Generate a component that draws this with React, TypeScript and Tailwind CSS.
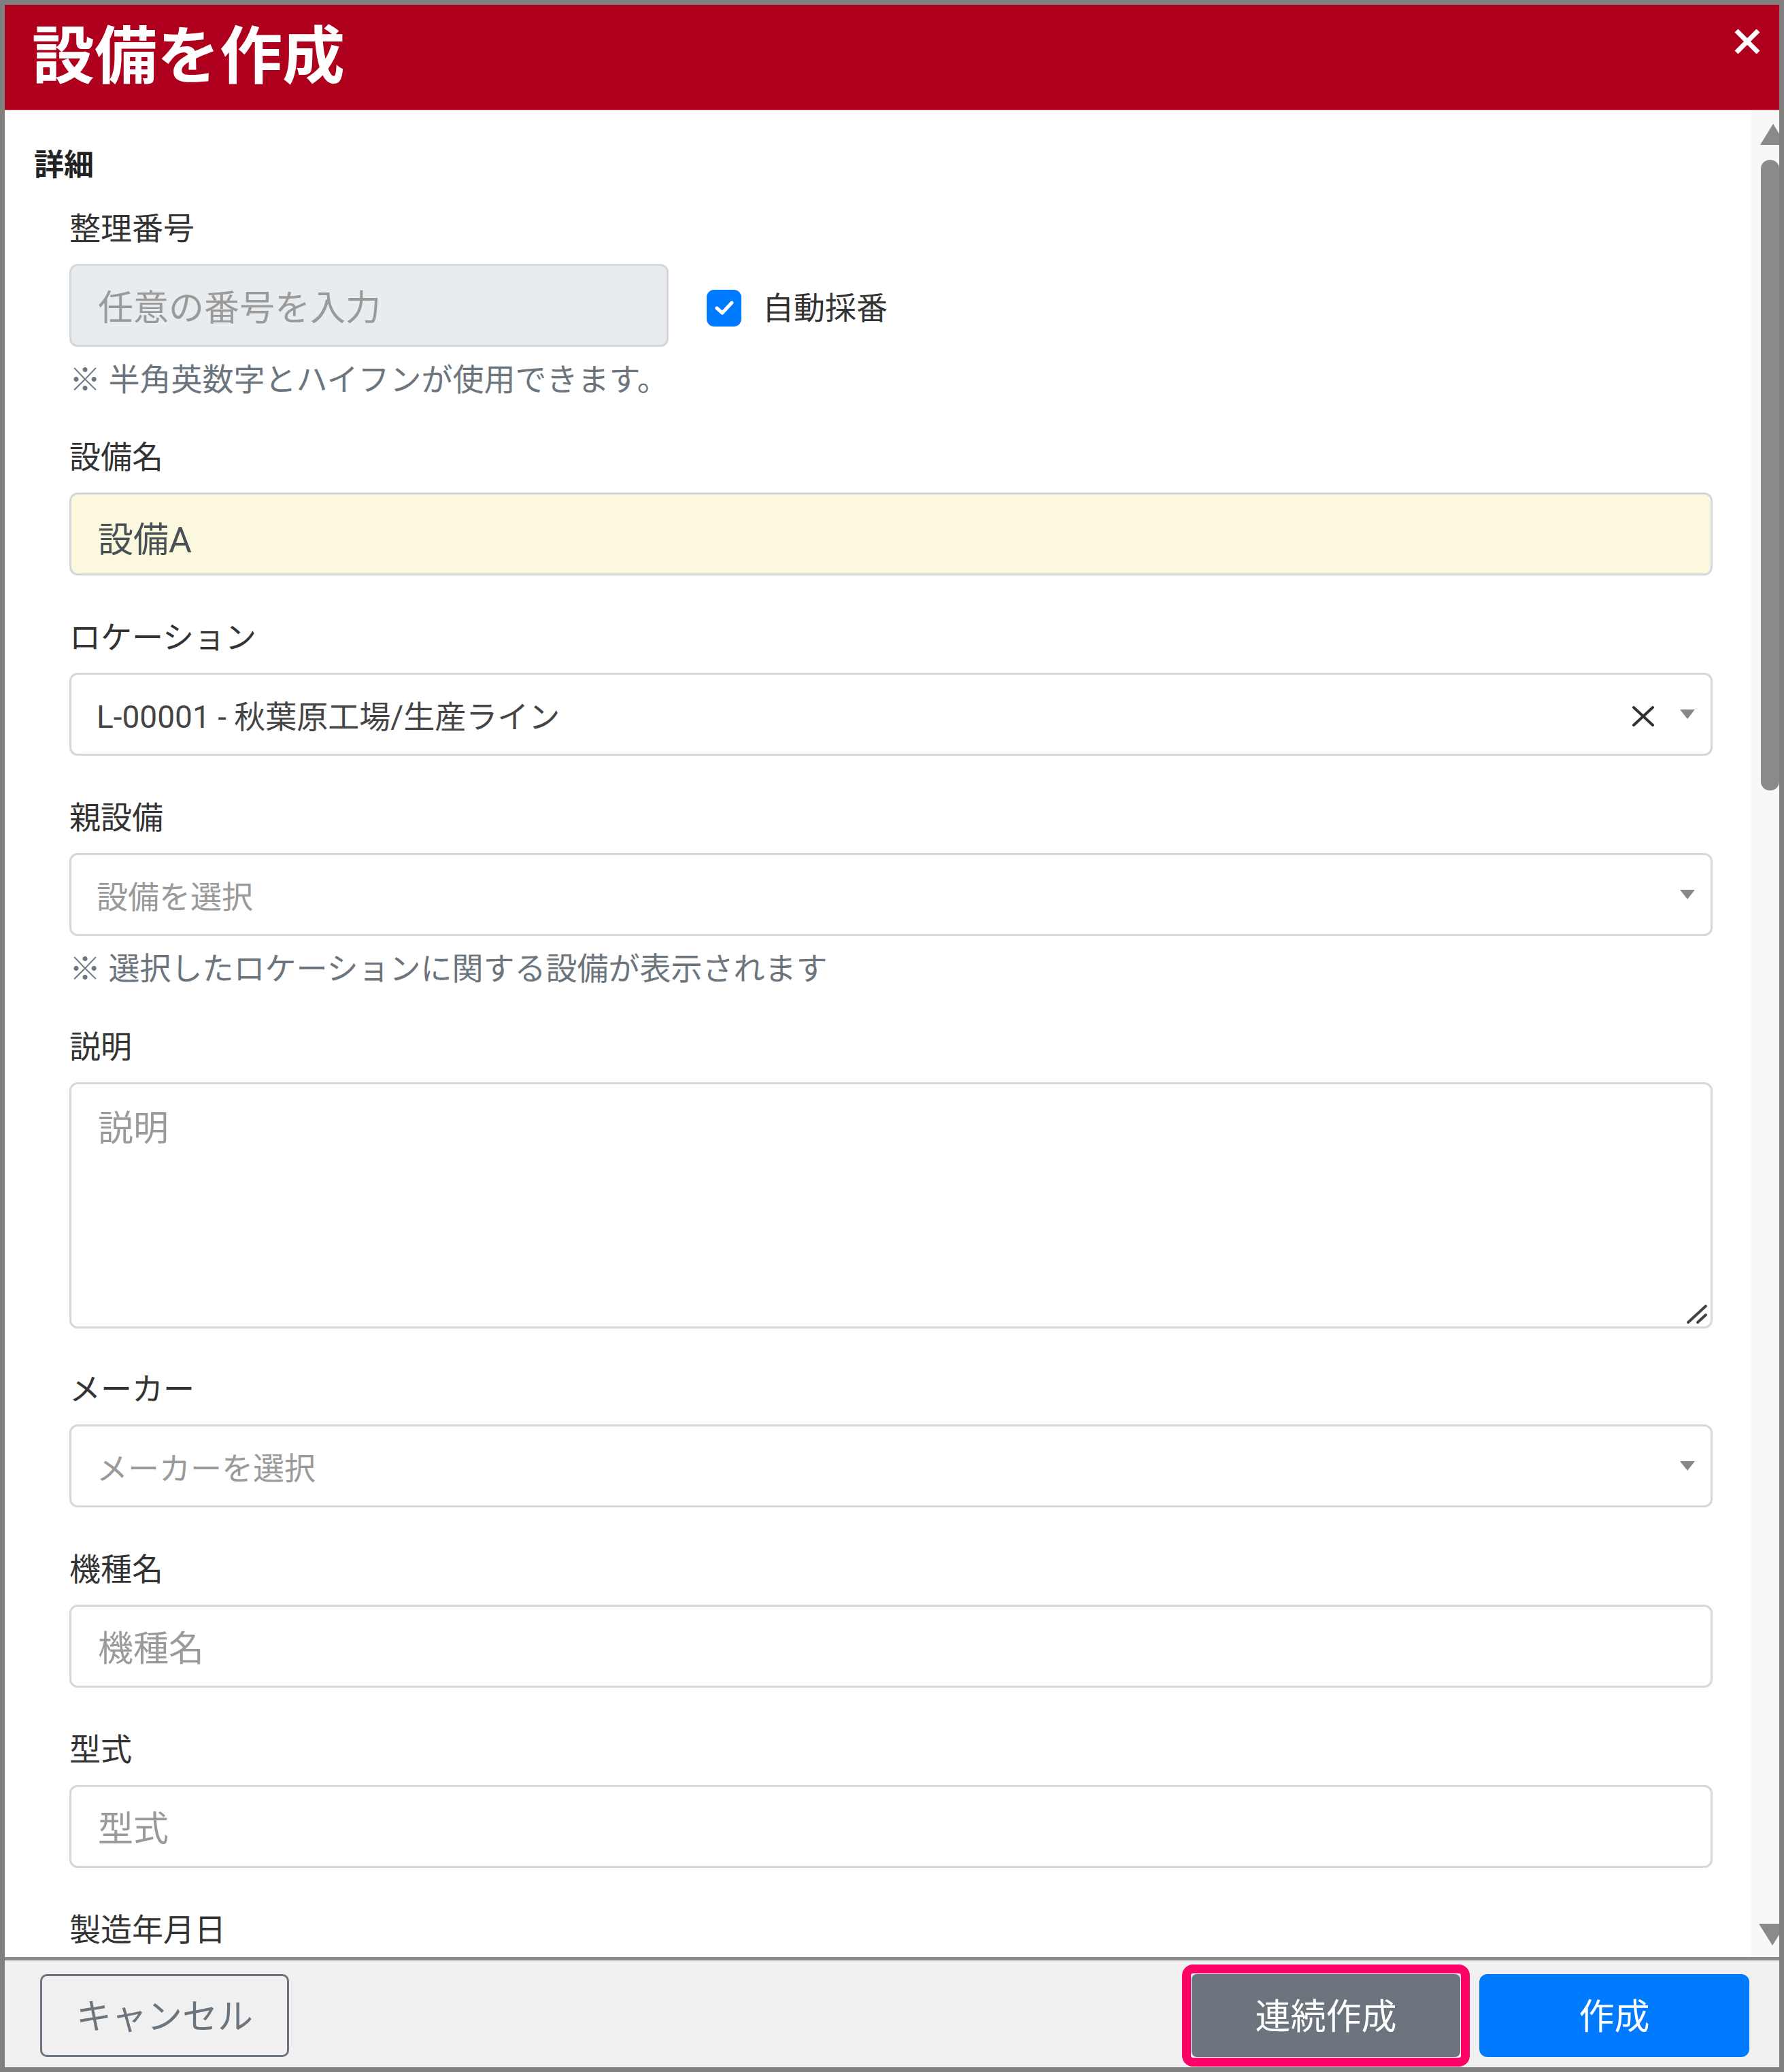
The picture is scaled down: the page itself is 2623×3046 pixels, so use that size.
import React from "react";

function Label({ children }: { children: React.ReactNode }) {
  return <div className="mb-[20px] pt-[4px] text-[46px] leading-[64px] text-[#333]">{children}</div>;
}

function Help({ children }: { children: React.ReactNode }) {
  return <div className="mt-[14px] pt-[4px] text-[46px] leading-[60px] text-[#6c757d]">{children}</div>;
}

function Caret() {
  return (
    <svg width="22" height="14" viewBox="0 0 22 14" className="shrink-0">
      <polygon points="0,0 22,0 11,14" fill="#888" />
    </svg>
  );
}

function SelectBox({ text, placeholder, clear }: { text?: string; placeholder?: string; clear?: boolean }) {
  return (
    <div className="flex h-[122px] w-full items-center rounded-[12px] border-[3px] border-[#d3d8dd] bg-white pl-[37px] pr-[23px]">
      <div className={"flex-1 pt-[8px] text-[46px] " + (text ? "text-[#444]" : "text-[#9a9a9a]")}>{text ?? placeholder}</div>
      {clear && (
        <svg width="32" height="30" viewBox="0 0 32 30" className="mr-[38px] mt-[6px] shrink-0">
          <line x1="2" y1="2" x2="30" y2="28" stroke="#333" strokeWidth="4" strokeLinecap="round" />
          <line x1="30" y1="2" x2="2" y2="28" stroke="#333" strokeWidth="4" strokeLinecap="round" />
        </svg>
      )}
      <Caret />
    </div>
  );
}

function TextInput({ placeholder, value, bg }: { placeholder?: string; value?: string; bg?: string }) {
  return (
    <input
      readOnly
      value={value ?? ""}
      placeholder={placeholder}
      className={
        "block h-[122px] w-full rounded-[12px] border-[3px] border-[#d3d8dd] px-[39px] pt-[8px] text-[52px] text-[#495057] outline-none placeholder:text-[#9a9a9a] " +
        (bg ?? "bg-white")
      }
    />
  );
}

export default function App() {
  return (
    <div className="h-[3046px] w-[2623px] bg-[#808080] p-[7px] [font-family:Roboto,'Noto_Sans_CJK_JP',sans-serif]">
      <div className="flex h-full flex-col bg-white">
        {/* Header */}
        <header className="flex h-[155px] shrink-0 justify-between border-b-2 border-[#c41a30] bg-[#ae001c]">
          <h1 className="self-center pl-[40px] text-[92px] font-bold leading-none text-white">設備を作成</h1>
          <button className="mr-[28px] mt-[36px] self-start">
            <svg width="38" height="36" viewBox="0 0 38 36">
              <line x1="3" y1="2" x2="35" y2="34" stroke="#fff" strokeWidth="7" />
              <line x1="35" y1="2" x2="3" y2="34" stroke="#fff" strokeWidth="7" />
            </svg>
          </button>
        </header>

        {/* Body */}
        <div className="flex min-h-0 flex-1">
          <div className="min-w-0 flex-1 overflow-hidden pl-[43px] pr-[57px] pt-[47px]">
            <div className="pt-[4px] text-[44px] font-bold leading-[60px] text-[#222]">詳細</div>
            <div className="mt-[27px] pl-[52px]">
              {/* 整理番号 */}
              <Label>整理番号</Label>
              <div className="flex items-center">
                <div className="w-[881px]">
                  <TextInput placeholder="任意の番号を入力" bg="bg-[#e9ecef]" />
                </div>
                <div className="ml-[56px] mt-[8px] flex h-[54px] w-[51px] items-center justify-center rounded-[11px] bg-[#007bff]">
                  <svg width="28" height="22" viewBox="0 0 28 22">
                    <polyline points="3,11 11,18 25,3" fill="none" stroke="#fff" strokeWidth="5" strokeLinecap="round" strokeLinejoin="round" />
                  </svg>
                </div>
                <span className="ml-[31px] mt-[8px] text-[46px] text-[#333]">自動採番</span>
              </div>
              <Help>※ 半角英数字とハイフンが使用できます。</Help>

              {/* 設備名 */}
              <div className="mt-[48px]">
                <Label>設備名</Label>
                <TextInput value="設備A" bg="bg-[#fbf8dd]" />
              </div>

              {/* ロケーション */}
              <div className="mt-[55px]">
                <Label>ロケーション</Label>
                <SelectBox text="L-00001 - 秋葉原工場/生産ライン" clear />
              </div>

              {/* 親設備 */}
              <div className="mt-[55px]">
                <Label>親設備</Label>
                <SelectBox placeholder="設備を選択" />
                <Help>※ 選択したロケーションに関する設備が表示されます</Help>
              </div>

              {/* 説明 */}
              <div className="mt-[49px]">
                <Label>説明</Label>
                <div className="relative">
                  <textarea
                    readOnly
                    placeholder="説明"
                    className="block h-[362px] w-full resize-none rounded-[12px] border-[3px] border-[#d3d8dd] bg-white px-[39px] pt-[28px] text-[52px] leading-[75px] text-[#495057] outline-none placeholder:text-[#9a9a9a]"
                  />
                  <svg width="32" height="30" viewBox="0 0 32 30" className="absolute bottom-[6px] right-[7px]">
                    <line x1="3" y1="27" x2="29" y2="3" stroke="#444" strokeWidth="4" strokeLinecap="round" />
                    <line x1="17" y1="27" x2="29" y2="16" stroke="#444" strokeWidth="4" strokeLinecap="round" />
                  </svg>
                </div>
              </div>

              {/* メーカー */}
              <div className="mt-[53px]">
                <Label>メーカー</Label>
                <SelectBox placeholder="メーカーを選択" />
              </div>

              {/* 機種名 */}
              <div className="mt-[55px]">
                <Label>機種名</Label>
                <TextInput placeholder="機種名" />
              </div>

              {/* 型式 */}
              <div className="mt-[55px]">
                <Label>型式</Label>
                <TextInput placeholder="型式" />
              </div>

              {/* 製造年月日 */}
              <div className="mt-[55px]">
                <Label>製造年月日</Label>
                <TextInput placeholder="" />
              </div>
            </div>
          </div>

          {/* Scrollbar */}
          <div className="flex w-[41px] shrink-0 flex-col items-end bg-[#f8f8f8]">
            <svg width="28" height="31" viewBox="0 0 28 31" className="mt-[20px]">
              <polygon points="0,31 19,0 38,31" fill="#8a8a8a" />
            </svg>
            <div className="mt-[22px] h-[927px] w-[27px] rounded-[13px] bg-[#8a8a8a]" />
            <svg width="30" height="32" viewBox="0 0 30 32" className="mb-[17px] mt-auto">
              <polygon points="0,0 40,0 20,32" fill="#8a8a8a" />
            </svg>
          </div>
        </div>

        {/* Footer */}
        <footer className="flex h-[162px] shrink-0 items-start border-t-[5px] border-[#8c8c8c] bg-[#f0f0f0] pl-[52px] pr-[44px] pt-[20px]">
          <button className="flex h-[122px] w-[366px] items-center justify-center rounded-[10px] border-[3px] border-[#6c757d] pt-[6px] text-[52px] text-[#6c757d]">
            キャンセル
          </button>
          <div className="flex-1" />
          <div className="relative">
            <button className="flex h-[122px] w-[395px] items-center justify-center rounded-[8px] bg-[#6c757d] pt-[6px] text-[52px] text-white">
              連続作成
            </button>
            <div className="pointer-events-none absolute -inset-[14px] rounded-[16px] border-[13px] border-[#ff0066]" />
          </div>
          <button className="ml-[28px] flex h-[122px] w-[397px] items-center justify-center rounded-[12px] bg-[#007bff] pt-[6px] text-[52px] text-white">
            作成
          </button>
        </footer>
      </div>
    </div>
  );
}
